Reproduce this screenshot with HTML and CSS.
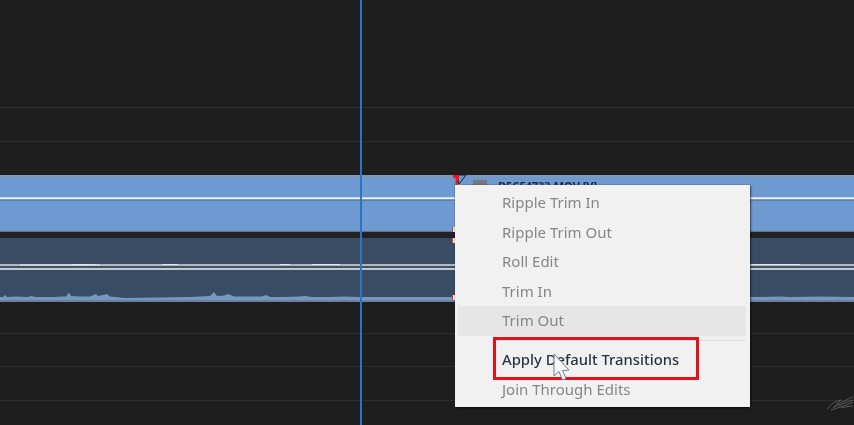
FILE: index.html
```html
<!DOCTYPE html>
<html lang="en">
<head>
<meta charset="utf-8">
<title>Timeline context menu</title>
<link rel="stylesheet" href="styles.css">
</head>
<body>
<main class="timeline">
  <div class="row row-a"></div>
  <div class="row row-b"></div>
  <div class="row-gap-top"></div>
  <section class="clip video">
    <div class="pane pane-head"></div>
    <div class="rubber"></div>
    <div class="pane"></div>
  </section>
  <div class="track-gap"></div>
  <section class="clip audio">
    <div class="pane pane-head"></div>
    <div class="rubber-audio">
      <svg class="wave-top" viewBox="0 0 854 3" preserveAspectRatio="none" aria-hidden="true">
        <path d="M20 1H100M72 0.500H95M162 0.500H178M280 0.500H290M312 0.500H340M520 0.500H560M750 0.500H800" stroke="#e2e7ec" stroke-width="1" fill="none"/>
      </svg>
    </div>
    <div class="pane pane-wave">
      <svg class="wave" viewBox="0 0 854 14" preserveAspectRatio="none" aria-hidden="true">
        <path d="M0 14V11L3 11 5 9 7 11 16 10.500 28 11 31 10 36 11 55 11 60 10.500 66 10.500 69 6.500 71 10 80 10.500 90 10.500 96 8 98 10 103 9 107 8 110 10.500 125 12 190 11 200 10.500 210 10 214 6 217 10 224 9.500 228 8 234 10.500 262 10.500 266 9 270 11 282 11 300 10.500 305 10 312 11 330 11 345 10.500 361 11 420 11 455 11 760 11 780 10.500 790 11 820 10.500 854 11V14Z" fill="#7598c0"/>
      </svg>
    </div>
  </section>
  <div class="row row-c"></div>
  <div class="row row-d"></div>
  <div class="row row-e"></div>

  <div class="playhead"></div>

  <div class="clip-head">
    <svg class="edit-mark" viewBox="0 0 16 11" aria-hidden="true">
      <path d="M5 0H14L7 9Z" fill="#6d9ad0" stroke="#1c1c1c" stroke-width="1"/>
      <path d="M1 0H7V3L5.500 10H3.500V3H1Z" fill="#f01818"/>
    </svg>
    <span class="clip-icon"></span>
    <span class="clip-name">D5CF4733.MOV [V]</span>
  </div>
  <span class="edge edge-1"></span>
  <span class="edge edge-2"></span>
  <span class="edge edge-3"></span>

  <nav class="menu">
    <div class="item">Ripple Trim In</div>
    <div class="item">Ripple Trim Out</div>
    <div class="item">Roll Edit</div>
    <div class="item">Trim In</div>
    <div class="item is-hover">Trim Out</div>
    <div class="separator"></div>
    <div class="item is-active">Apply Default Transitions</div>
    <div class="item">Join Through Edits</div>
    <div class="callout"></div>
    <svg class="cursor" viewBox="0 0 20 30" aria-hidden="true">
      <path d="M2 1V23L7 18.500 10.500 27 14 25.500 10.500 17.500 17 17Z" fill="#f8f9fb" stroke="#6f7f92" stroke-width="1"/>
    </svg>
  </nav>

  <svg class="scribble" viewBox="0 0 28 16" aria-hidden="true">
    <path d="M1 14C6 8 10 6 15 5C12 8 9 11 7 13C12 9 18 6 27 2M5 15C11 13 18 11 27 7M12 11C17 8 21 7 27 5M15 13C19 12 23 11 27 11" fill="none" stroke="#666666" stroke-width="0.800"/>
  </svg>
</main>
</body>
</html>
```

FILE: styles.css
```css
html, body {
  margin: 0;
  padding: 0;
  background: #1e1e1e;
}

.timeline {
  position: relative;
  display: flex;
  flex-direction: column;
  width: 854px;
  height: 425px;
  overflow: hidden;
  background: #1e1e1e;
  font-family: "Noto Sans", "Open Sans", sans-serif;
  filter: blur(0.5px);
}

.row {
  flex: none;
  box-sizing: border-box;
  border-bottom: 1px solid #2d2d2c;
}
.row-a { height: 108px; }
.row-b { height: 34px; }
.row-gap-top { flex: none; height: 33px; }
.row-c { height: 32px; }
.row-d { height: 33px; }
.row-e { height: 34px; }

.clip {
  flex: none;
  display: flex;
  flex-direction: column;
  box-sizing: border-box;
}
.pane { flex: 1; position: relative; }

.video {
  height: 57px;
  background: #6d9ad0;
  border-top: 2px solid #8698b0;
  border-bottom: 1px solid #5d7391;
}
.video .pane-head { flex: none; height: 20px; }
.video .rubber {
  flex: none;
  height: 4px;
  background: linear-gradient(#c3d7ee 0 25%, #eef3f8 25% 50%, #8a97a8 50% 75%, #5f7fa8 75%);
}

.track-gap { flex: none; height: 6px; background: #222222; }

.audio {
  height: 64px;
  background: #384c63;
  border-bottom: 2px solid #6d8098;
}
.audio .pane-head { flex: none; height: 26px; }
.rubber-audio {
  flex: none;
  height: 6px;
  background: linear-gradient(#aeb9c6 0 33%, #46525f 33% 66%, #c0cad5 66%);
}
.wave-top {
  display: block;
  width: 854px;
  height: 3px;
}
.wave {
  position: absolute;
  left: 0;
  bottom: 0;
  width: 854px;
  height: 14px;
  display: block;
}

.playhead {
  position: absolute;
  left: 360px;
  top: 0;
  width: 2px;
  height: 425px;
  background: #2f74c4;
}

.clip-head {
  position: absolute;
  left: 452px;
  top: 175px;
  display: flex;
  align-items: flex-start;
  height: 14px;
}
.edit-mark {
  display: block;
  width: 16px;
  height: 11px;
}
.clip-icon {
  display: block;
  width: 14px;
  height: 10px;
  margin: 5px 0 0 5px;
  background: #77797c;
}
.clip-name {
  margin: 3px 0 0 11px;
  font-size: 11px;
  line-height: 15px;
  font-weight: 700;
  color: #1b2a42;
  white-space: nowrap;
}

.edge {
  position: absolute;
  left: 452px;
  width: 3px;
  background: #f4e9e9;
  border-left: 1px solid #e23636;
  box-sizing: border-box;
}
.edge-1 { top: 227px; height: 5px; }
.edge-2 { top: 238px; height: 5px; }
.edge-3 { top: 295px; height: 5px; }

.menu {
  position: absolute;
  left: 455px;
  top: 185px;
  box-sizing: border-box;
  width: 295px;
  height: 222px;
  padding-top: 3px;
  background: #f1f1f1;
  box-shadow: 1px 1px 2px rgba(0, 0, 0, 0.55), 0 0 1px rgba(0, 0, 0, 0.5);
}
.item {
  box-sizing: border-box;
  height: 29.5px;
  margin: 0 4px 0 3px;
  padding-left: 44px;
  font-size: 15px;
  line-height: 29.5px;
  color: #868686;
  white-space: nowrap;
}
.is-hover { background: #e6e6e6; }
.is-active { color: #2a3542; font-weight: 500; font-size: 14.800px; }
.separator {
  height: 1px;
  margin: 4px 4px 4.500px 40px;
  background: #dcdcdc;
}

.callout {
  position: absolute;
  left: 38px;
  top: 152px;
  box-sizing: border-box;
  width: 206px;
  height: 43px;
  border: 3px solid #e4101a;
}
.cursor {
  position: absolute;
  left: 97px;
  top: 168px;
  width: 20px;
  height: 30px;
}

.scribble {
  position: absolute;
  left: 826px;
  top: 395px;
  width: 28px;
  height: 16px;
}
```
